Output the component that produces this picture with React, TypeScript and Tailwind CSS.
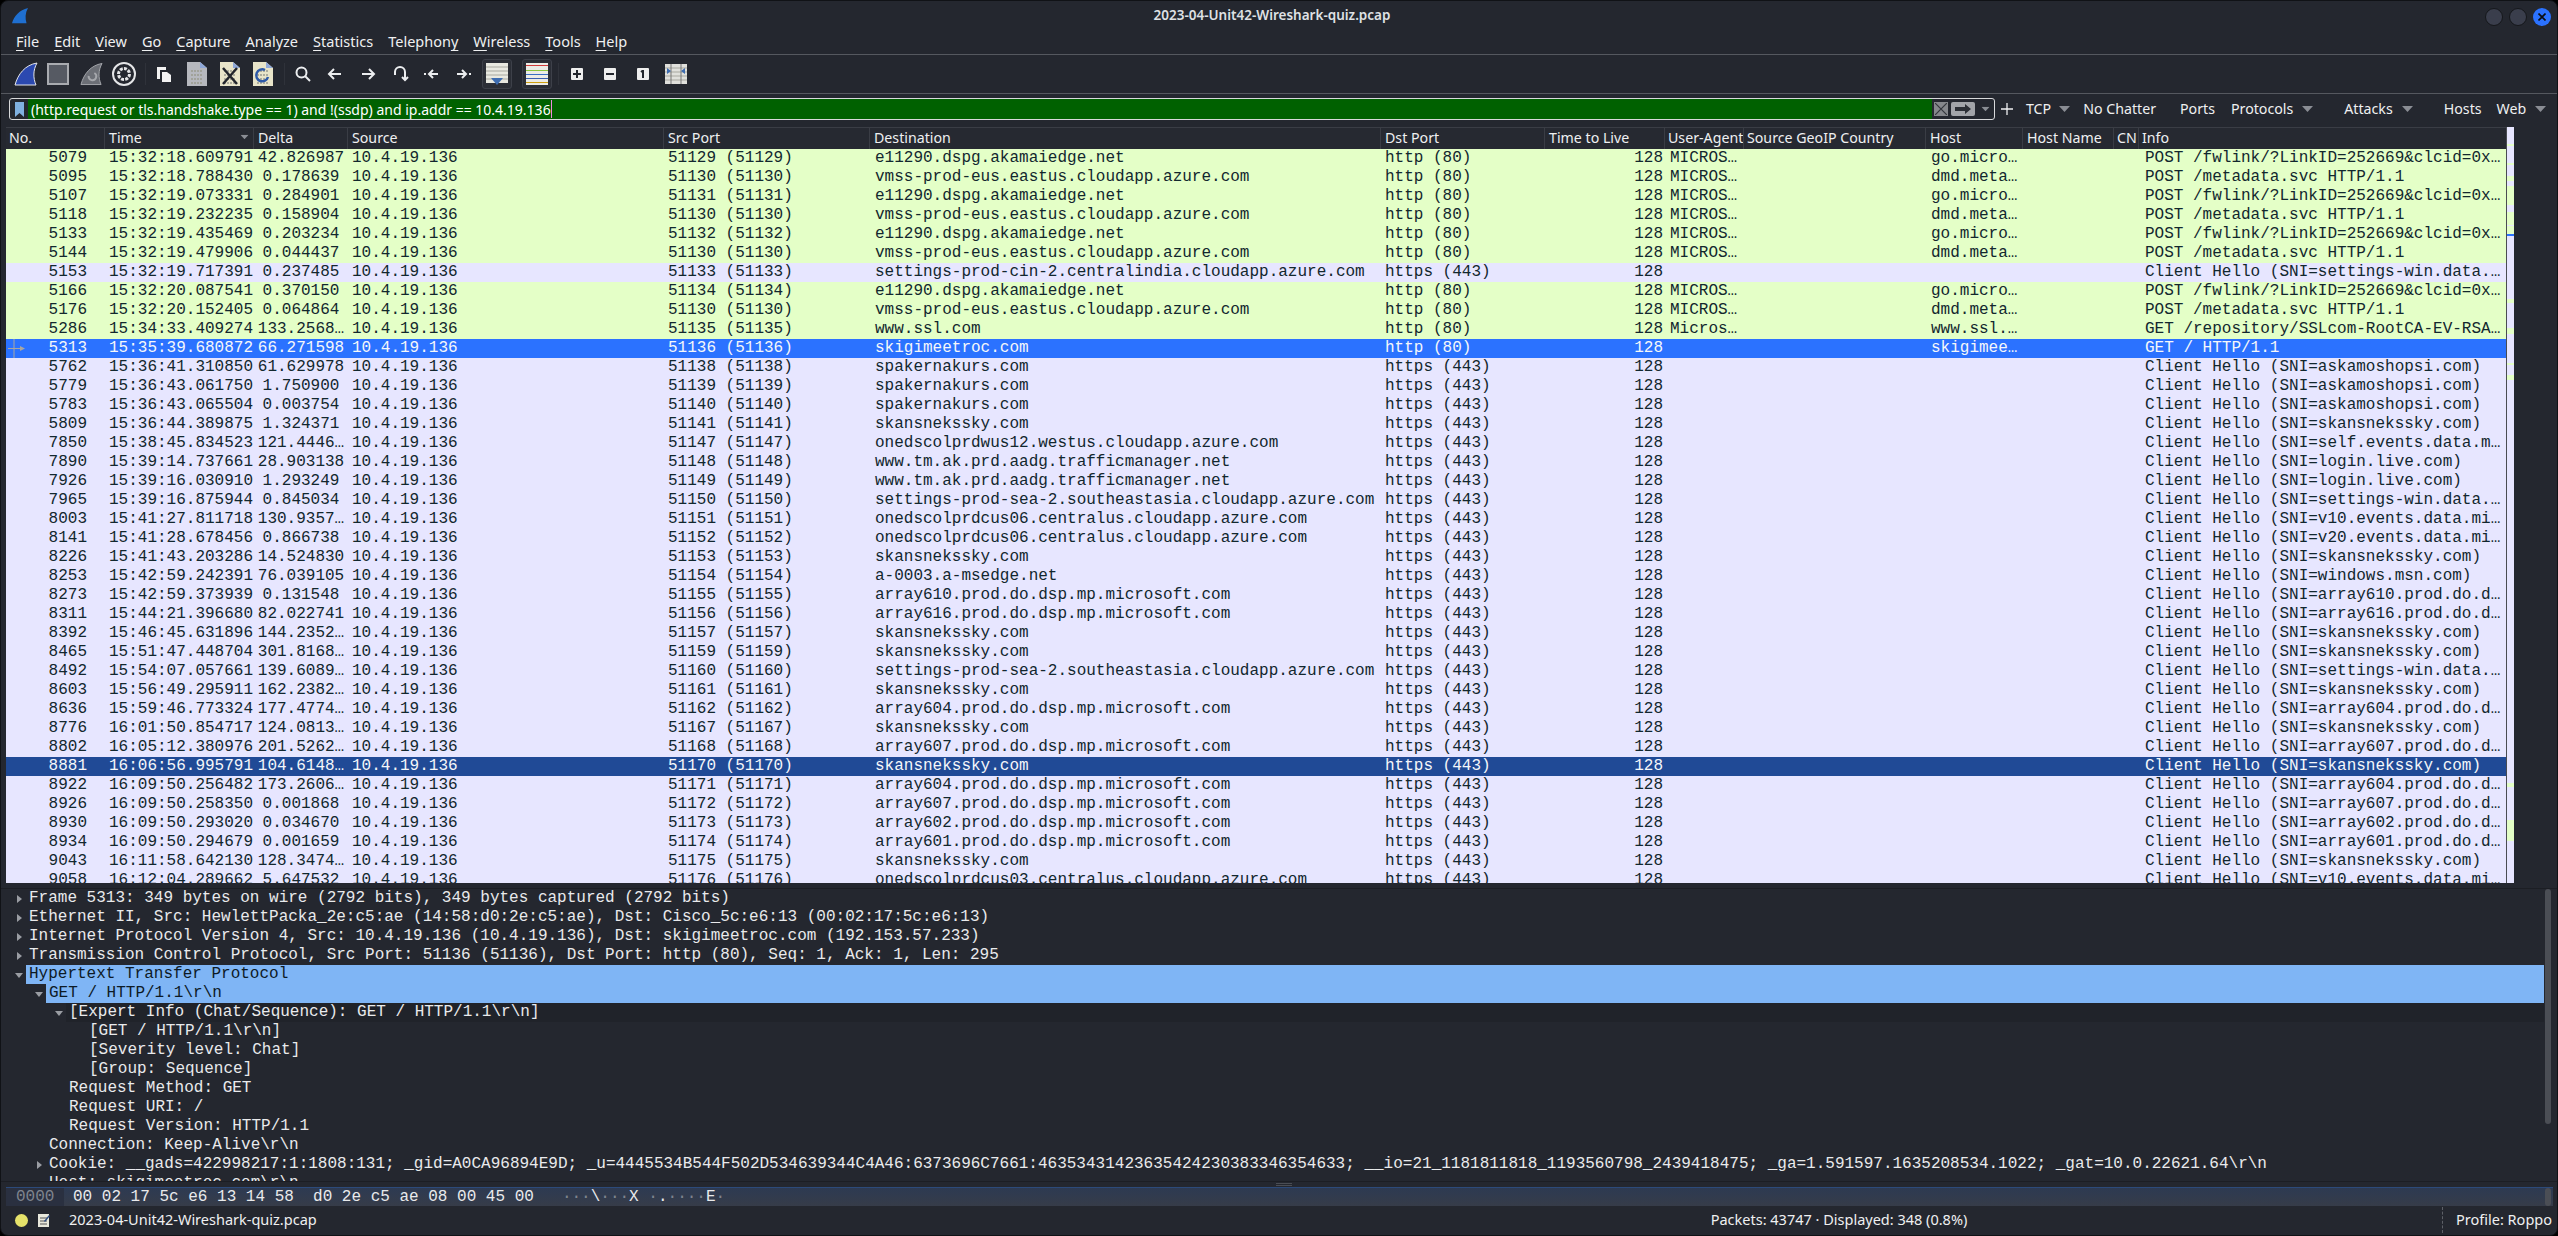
import { ReactNode } from "react";

const GRID =
  "grid grid-cols-[99px_149px_94px_316px_206px_511px_164px_120px_79px_182px_97px_91px_25px_368px]";

type Row = [string, string, string, string, string, string, string, string, string];

const E11290 = "e11290.dspg.akamaiedge.net";
const VMSS = "vmss-prod-eus.eastus.cloudapp.azure.com";
const FWLINK = "POST /fwlink/?LinkID=252669&clcid=0x…";
const META = "POST /metadata.svc HTTP/1.1";
const TM = "www.tm.ak.prd.aadg.trafficmanager.net";
const SEA = "settings-prod-sea-2.southeastasia.cloudapp.azure.com";
const CUS06 = "onedscolprdcus06.centralus.cloudapp.azure.com";
const SKAN = "skansnekssky.com";
const SKAN_SNI = "Client Hello (SNI=skansnekssky.com)";
const HTTP = "http (80)";
const TLS = "https (443)";

const rows: Row[] = [
  ["5079", "15:32:18.609791", "42.826987", "51129", E11290, HTTP, "MICROS…", "go.micro…", FWLINK],
  ["5095", "15:32:18.788430", "0.178639", "51130", VMSS, HTTP, "MICROS…", "dmd.meta…", META],
  ["5107", "15:32:19.073331", "0.284901", "51131", E11290, HTTP, "MICROS…", "go.micro…", FWLINK],
  ["5118", "15:32:19.232235", "0.158904", "51130", VMSS, HTTP, "MICROS…", "dmd.meta…", META],
  ["5133", "15:32:19.435469", "0.203234", "51132", E11290, HTTP, "MICROS…", "go.micro…", FWLINK],
  ["5144", "15:32:19.479906", "0.044437", "51130", VMSS, HTTP, "MICROS…", "dmd.meta…", META],
  ["5153", "15:32:19.717391", "0.237485", "51133", "settings-prod-cin-2.centralindia.cloudapp.azure.com", TLS, "", "", "Client Hello (SNI=settings-win.data.…"],
  ["5166", "15:32:20.087541", "0.370150", "51134", E11290, HTTP, "MICROS…", "go.micro…", FWLINK],
  ["5176", "15:32:20.152405", "0.064864", "51130", VMSS, HTTP, "MICROS…", "dmd.meta…", META],
  ["5286", "15:34:33.409274", "133.2568…", "51135", "www.ssl.com", HTTP, "Micros…", "www.ssl.…", "GET /repository/SSLcom-RootCA-EV-RSA…"],
  ["5313", "15:35:39.680872", "66.271598", "51136", "skigimeetroc.com", HTTP, "", "skigimee…", "GET / HTTP/1.1"],
  ["5762", "15:36:41.310850", "61.629978", "51138", "spakernakurs.com", TLS, "", "", "Client Hello (SNI=askamoshopsi.com)"],
  ["5779", "15:36:43.061750", "1.750900", "51139", "spakernakurs.com", TLS, "", "", "Client Hello (SNI=askamoshopsi.com)"],
  ["5783", "15:36:43.065504", "0.003754", "51140", "spakernakurs.com", TLS, "", "", "Client Hello (SNI=askamoshopsi.com)"],
  ["5809", "15:36:44.389875", "1.324371", "51141", SKAN, TLS, "", "", SKAN_SNI],
  ["7850", "15:38:45.834523", "121.4446…", "51147", "onedscolprdwus12.westus.cloudapp.azure.com", TLS, "", "", "Client Hello (SNI=self.events.data.m…"],
  ["7890", "15:39:14.737661", "28.903138", "51148", TM, TLS, "", "", "Client Hello (SNI=login.live.com)"],
  ["7926", "15:39:16.030910", "1.293249", "51149", TM, TLS, "", "", "Client Hello (SNI=login.live.com)"],
  ["7965", "15:39:16.875944", "0.845034", "51150", SEA, TLS, "", "", "Client Hello (SNI=settings-win.data.…"],
  ["8003", "15:41:27.811718", "130.9357…", "51151", CUS06, TLS, "", "", "Client Hello (SNI=v10.events.data.mi…"],
  ["8141", "15:41:28.678456", "0.866738", "51152", CUS06, TLS, "", "", "Client Hello (SNI=v20.events.data.mi…"],
  ["8226", "15:41:43.203286", "14.524830", "51153", SKAN, TLS, "", "", SKAN_SNI],
  ["8253", "15:42:59.242391", "76.039105", "51154", "a-0003.a-msedge.net", TLS, "", "", "Client Hello (SNI=windows.msn.com)"],
  ["8273", "15:42:59.373939", "0.131548", "51155", "array610.prod.do.dsp.mp.microsoft.com", TLS, "", "", "Client Hello (SNI=array610.prod.do.d…"],
  ["8311", "15:44:21.396680", "82.022741", "51156", "array616.prod.do.dsp.mp.microsoft.com", TLS, "", "", "Client Hello (SNI=array616.prod.do.d…"],
  ["8392", "15:46:45.631896", "144.2352…", "51157", SKAN, TLS, "", "", SKAN_SNI],
  ["8465", "15:51:47.448704", "301.8168…", "51159", SKAN, TLS, "", "", SKAN_SNI],
  ["8492", "15:54:07.057661", "139.6089…", "51160", SEA, TLS, "", "", "Client Hello (SNI=settings-win.data.…"],
  ["8603", "15:56:49.295911", "162.2382…", "51161", SKAN, TLS, "", "", SKAN_SNI],
  ["8636", "15:59:46.773324", "177.4774…", "51162", "array604.prod.do.dsp.mp.microsoft.com", TLS, "", "", "Client Hello (SNI=array604.prod.do.d…"],
  ["8776", "16:01:50.854717", "124.0813…", "51167", SKAN, TLS, "", "", SKAN_SNI],
  ["8802", "16:05:12.380976", "201.5262…", "51168", "array607.prod.do.dsp.mp.microsoft.com", TLS, "", "", "Client Hello (SNI=array607.prod.do.d…"],
  ["8881", "16:06:56.995791", "104.6148…", "51170", SKAN, TLS, "", "", SKAN_SNI],
  ["8922", "16:09:50.256482", "173.2606…", "51171", "array604.prod.do.dsp.mp.microsoft.com", TLS, "", "", "Client Hello (SNI=array604.prod.do.d…"],
  ["8926", "16:09:50.258350", "0.001868", "51172", "array607.prod.do.dsp.mp.microsoft.com", TLS, "", "", "Client Hello (SNI=array607.prod.do.d…"],
  ["8930", "16:09:50.293020", "0.034670", "51173", "array602.prod.do.dsp.mp.microsoft.com", TLS, "", "", "Client Hello (SNI=array602.prod.do.d…"],
  ["8934", "16:09:50.294679", "0.001659", "51174", "array601.prod.do.dsp.mp.microsoft.com", TLS, "", "", "Client Hello (SNI=array601.prod.do.d…"],
  ["9043", "16:11:58.642130", "128.3474…", "51175", SKAN, TLS, "", "", SKAN_SNI],
  ["9058", "16:12:04.289662", "5.647532", "51176", "onedscolprdcus03.centralus.cloudapp.azure.com", TLS, "", "", "Client Hello (SNI=v10.events.data.mi…"],
];

const headers: [string, string][] = [
  ["No.", "pl-[3px]"],
  ["Time", "pl-[4px]"],
  ["Delta", "pl-[4px]"],
  ["Source", "pl-[4px]"],
  ["Src Port", "pl-[4px]"],
  ["Destination", "pl-[4px]"],
  ["Dst Port", "pl-[4px]"],
  ["Time to Live", "pl-[4px]"],
  ["User-Agent", "pl-[3px]"],
  ["Source GeoIP Country", "pl-[3px]"],
  ["Host", "pl-[4px]"],
  ["Host Name", "pl-[4px]"],
  ["CN", "pl-[3px]"],
  ["Info", "pl-[3px]"],
];

// packet map strip beside the list, top to bottom
const minimap = [
  "h-[17px] bg-[#e7e6ff]",
  "h-[2px] bg-[#e4ffc7]",
  "h-[17px] bg-[#e7e6ff]",
  "h-[2px] bg-[#e4ffc7]",
  "h-[11px] bg-[#e7e6ff]",
  "h-[5px] bg-[#e4ffc7]",
  "h-[5px] bg-[#e7e6ff]",
  "h-[19px] bg-[#e4ffc7]",
  "h-[7px] bg-[#e7e6ff]",
  "h-[13px] bg-[#e4ffc7]",
  "h-[1px] bg-[#e7e6ff]",
  "h-[8px] bg-[#e4ffc7]",
  "h-[2px] bg-[#2b72ff]",
  "h-[63px] bg-[#e7e6ff]",
  "h-[4px] bg-[#e4ffc7]",
  "h-[25px] bg-[#e7e6ff]",
  "h-[6px] bg-[#e4ffc7]",
  "h-[29px] bg-[#e7e6ff]",
  "h-[2px] bg-[#e4ffc7]",
  "h-[10px] bg-[#e7e6ff]",
  "h-[5px] bg-[#e4ffc7]",
  "h-[404px] bg-[#e7e6ff]",
  "h-[4px] bg-[#e4ffc7]",
  "h-[33px] bg-[#e7e6ff]",
  "h-[21px] bg-[#e4ffc7]",
  "h-[42px] bg-[#e7e6ff]",
];

const details: { level: number; arrow?: "right" | "down"; text: string; style?: string }[] = [
  { level: 0, arrow: "right", text: "Frame 5313: 349 bytes on wire (2792 bits), 349 bytes captured (2792 bits)" },
  { level: 0, arrow: "right", text: "Ethernet II, Src: HewlettPacka_2e:c5:ae (14:58:d0:2e:c5:ae), Dst: Cisco_5c:e6:13 (00:02:17:5c:e6:13)" },
  { level: 0, arrow: "right", text: "Internet Protocol Version 4, Src: 10.4.19.136 (10.4.19.136), Dst: skigimeetroc.com (192.153.57.233)" },
  { level: 0, arrow: "right", text: "Transmission Control Protocol, Src Port: 51136 (51136), Dst Port: http (80), Seq: 1, Ack: 1, Len: 295" },
  { level: 0, arrow: "down", text: "Hypertext Transfer Protocol", style: "bg-[#7fb5f5] text-[#0d1a26]" },
  { level: 1, arrow: "down", text: "GET / HTTP/1.1\\r\\n", style: "bg-[#7fb5f5] text-[#0d1a26]" },
  { level: 2, arrow: "down", text: "[Expert Info (Chat/Sequence): GET / HTTP/1.1\\r\\n]", style: "bg-[#20232a]" },
  { level: 3, text: "[GET / HTTP/1.1\\r\\n]" },
  { level: 3, text: "[Severity level: Chat]" },
  { level: 3, text: "[Group: Sequence]" },
  { level: 2, text: "Request Method: GET" },
  { level: 2, text: "Request URI: /" },
  { level: 2, text: "Request Version: HTTP/1.1" },
  { level: 1, text: "Connection: Keep-Alive\\r\\n" },
  {
    level: 1,
    arrow: "right",
    text: "Cookie: __gads=422998217:1:1808:131; _gid=A0CA96894E9D; _u=4445534B544F502D534639344C4A46:6373696C7661:46353431423635424230383346354633; __io=21_1181811818_1193560798_2439418475; _ga=1.591597.1635208534.1022; _gat=10.0.22621.64\\r\\n",
  },
  { level: 1, text: "Host: skigimeetroc.com\\r\\n" },
];

function Menu({ pre = "", hot, post = "" }: { pre?: string; hot: string; post?: string }) {
  return (
    <span>
      {pre}
      <span className="underline underline-offset-[3px]">{hot}</span>
      {post}
    </span>
  );
}

function Fin({ color }: { color: string }) {
  return (
    <svg width="24" height="24" viewBox="0 0 24 24">
      <path d="M1 23C4 12 11 3 23 1c-4 7-4 15-1 22Z" fill={color} stroke="#e6e7ea" strokeWidth="1" />
    </svg>
  );
}

function PageIcon({ children, paper = "#e8e4c9" }: { children?: ReactNode; paper?: string }) {
  return (
    <svg width="20" height="24" viewBox="0 0 20 24">
      <path d="M0 0h13l7 6v18H0Z" fill={paper} />
      <path d="M13 0l7 6h-7Z" fill="#8fa8d8" />
      <path d="M4 9h12M4 13h12M4 17h12M4 21h12" stroke="#9a9a8e" strokeWidth="1.5" strokeDasharray="2 1" />
      {children}
    </svg>
  );
}

function NavArrow({ d }: { d: string }) {
  return (
    <svg width="18" height="18" viewBox="0 0 18 18" fill="none" stroke="#eceef0" strokeWidth="2">
      <path d={d} />
    </svg>
  );
}

function Square({ children }: { children: ReactNode }) {
  return <div className="flex h-[12px] w-[12px] items-center justify-center rounded-[1px] bg-[#eeeeee]">{children}</div>;
}

function Caret({ className = "" }: { className?: string }) {
  return (
    <svg width="11" height="6" viewBox="0 0 11 6" className={`shrink-0 ${className}`}>
      <path d="M0 0h11L5.5 6Z" fill="#8a8d94" />
    </svg>
  );
}

function TreeArrow({ dir }: { dir: "right" | "down" }) {
  return (
    <svg width="8" height="8" viewBox="0 0 8 8">
      <path d={dir === "right" ? "M2 0l5 4-5 4Z" : "M0 2h8L4 7Z"} fill="#9a9da3" />
    </svg>
  );
}

function Toolbar() {
  return (
    <div className="flex h-[39px] shrink-0 items-center border-b border-[#55585f] pl-[13px]">
      <Fin color="#2b49b0" />
      <div className="ml-[9px] h-[22px] w-[22px] border-2 border-[#a9abb0] bg-[#565a63]" />
      <div className="ml-[11px]">
        <svg width="23" height="24" viewBox="0 0 24 24">
          <path d="M1 23C4 12 11 3 23 1c-4 7-4 15-1 22Z" fill="#6c6f76" stroke="#a5a7ac" strokeWidth="1" />
          <path d="M9 14a4 4 0 1 0 6-3" fill="none" stroke="#a5a7ac" strokeWidth="2" />
        </svg>
      </div>
      <div className="ml-[9px]">
        <svg width="24" height="24" viewBox="0 0 24 24" fill="none">
          <circle cx="12" cy="12" r="11" stroke="#e4e5e7" strokeWidth="2" />
          <circle cx="12" cy="12" r="5.5" stroke="#e4e5e7" strokeWidth="3" strokeDasharray="3 1.2" />
        </svg>
      </div>
      <div className="ml-[9px] h-[22px] w-px bg-[#2f323a]" />
      <div className="ml-[11px]">
        <svg width="15" height="15" viewBox="0 0 15 15">
          <path d="M0 0h9v3H3v9H0Z" fill="#f2f2f2" />
          <path d="M5 5h5l4 3v7H5Z" fill="#f2f2f2" />
        </svg>
      </div>
      <div className="ml-[15px]">
        <PageIcon paper="#b6b8be" />
      </div>
      <div className="ml-[13px]">
        <PageIcon>
          <path d="M3 6l14 16M17 6L3 22" stroke="#22252c" strokeWidth="2.5" />
        </PageIcon>
      </div>
      <div className="ml-[13px]">
        <PageIcon>
          <path d="M15 15a6 6 0 1 1-3-7" fill="none" stroke="#2e5aa8" strokeWidth="2.5" />
        </PageIcon>
      </div>
      <div className="ml-[11px] h-[22px] w-px bg-[#2f323a]" />
      <div className="ml-[10px]">
        <svg width="16" height="16" viewBox="0 0 16 16" fill="none" stroke="#eceef0" strokeWidth="2">
          <circle cx="6.5" cy="6.5" r="5" />
          <path d="M10 10l5 5" />
        </svg>
      </div>
      <div className="ml-[15px]">
        <NavArrow d="M15 9H3M8 4L3 9l5 5" />
      </div>
      <div className="ml-[15px]">
        <NavArrow d="M3 9h12M10 4l5 5-5 5" />
      </div>
      <div className="ml-[14px]">
        <NavArrow d="M4 10V7a5 5 0 0 1 10 0v8M11 12l3 3 3-3" />
      </div>
      <div className="ml-[13px]">
        <NavArrow d="M16 9H7M11 5L7 9l4 4M2 9h2" />
      </div>
      <div className="ml-[15px]">
        <NavArrow d="M2 9h9M7 5l4 4-4 4M14 9h2" />
      </div>
      <div className="ml-[9px] flex h-[30px] w-[30px] items-center justify-center rounded-[3px] border border-[#3d4049] bg-[#2b2e36]">
        <svg width="22" height="22" viewBox="0 0 22 22">
          <rect width="22" height="20" fill="#e8e8e0" />
          <path d="M0 4h22M0 8h22M0 12h22M0 16h22" stroke="#a8a8a0" strokeWidth="1" />
          <path d="M5 15h12l-6 7Z" fill="#3d6cb0" />
        </svg>
      </div>
      <div className="ml-[10px] flex h-[30px] w-[30px] items-center justify-center rounded-[3px] border border-[#3d4049] bg-[#2b2e36]">
        <svg width="22" height="22" viewBox="0 0 22 22">
          <rect width="22" height="22" fill="#ecece6" />
          <path d="M0 2.5h22" stroke="#d23a3a" strokeWidth="1" />
          <path d="M0 7.5h22" stroke="#8cc63f" strokeWidth="1" />
          <path d="M0 11.5h22" stroke="#3a6fc4" strokeWidth="1" />
          <path d="M0 15.5h22" stroke="#3a5fb0" strokeWidth="1" />
          <path d="M0 19.5h22" stroke="#d0a010" strokeWidth="1" />
        </svg>
      </div>
      <div className="ml-[6px] h-[22px] w-px bg-[#2f323a]" />
      <div className="ml-[12px]">
        <Square>
          <svg width="8" height="8" viewBox="0 0 8 8">
            <path d="M4 0v8M0 4h8" stroke="#22252c" strokeWidth="2" />
          </svg>
        </Square>
      </div>
      <div className="ml-[21px]">
        <Square>
          <svg width="8" height="8" viewBox="0 0 8 8">
            <path d="M0 4h8" stroke="#22252c" strokeWidth="2" />
          </svg>
        </Square>
      </div>
      <div className="ml-[21px]">
        <Square>
          <svg width="8" height="8" viewBox="0 0 8 8">
            <path d="M2 2l2-1.5V8" fill="none" stroke="#22252c" strokeWidth="2" />
          </svg>
        </Square>
      </div>
      <div className="ml-[16px]">
        <svg width="22" height="20" viewBox="0 0 22 20">
          <rect width="22" height="20" fill="#e0e0dc" />
          <path d="M0 4h22M0 8h22M0 12h22M0 16h22" stroke="#a8a8a0" strokeWidth="1" />
          <path d="M6 0v20M16 0v20" stroke="#777" strokeWidth="1" />
          <path d="M2 4l4 3-4 3ZM20 4l-4 3 4 3Z" fill="#3d6cb0" />
        </svg>
      </div>
    </div>
  );
}

function FilterBar() {
  return (
    <div className="flex h-[33px] shrink-0 items-start whitespace-nowrap pl-[8px] pt-[4px] text-[14.2px] text-[#eff0f1]">
      <div className="flex h-[22px] w-[1986px] shrink-0 items-stretch overflow-hidden rounded-[3px] border border-[#d8d9db] bg-[#24272f]">
        <div className="flex w-[18px] shrink-0 items-center justify-center">
          <svg width="9" height="15" viewBox="0 0 9 15">
            <path d="M0 0h9v15L4.5 11 0 15Z" fill="#7fb0e0" />
          </svg>
        </div>
        <div className="flex h-full w-[1904px] shrink-0 items-center bg-[#006100] pl-[3px] text-[14px] text-white">
          <span>(http.request or tls.handshake.type == 1) and !(ssdp) and ip.addr == 10.4.19.136</span>
          <span className="h-[18px] w-px bg-[#f08ae0]" />
        </div>
        <div className="ml-[2px] flex items-center">
          <div className="flex h-[14px] w-[14px] items-center justify-center bg-[#85878c]">
            <svg width="12" height="12" viewBox="0 0 12 12">
              <path d="M0 0l12 12M12 0L0 12" stroke="#33363d" strokeWidth="1.2" />
            </svg>
          </div>
          <div className="ml-[3px] flex h-[14px] w-[24px] items-center justify-center rounded-[2px] bg-[#a2a4a9]">
            <svg width="16" height="10" viewBox="0 0 16 10">
              <path d="M0 3h10V0l6 5-6 5V7H0Z" fill="#2b2e35" />
            </svg>
          </div>
          <Caret className="ml-[5px] scale-75" />
        </div>
      </div>
      <div className="flex h-[22px] items-center">
        <svg width="12" height="12" viewBox="0 0 12 12" className="ml-[6px] mr-[13px] shrink-0">
          <path d="M6 0v12M0 6h12" stroke="#eff0f1" strokeWidth="1.3" />
        </svg>
        <span>TCP</span>
        <Caret className="ml-[8px]" />
        <span className="ml-[13px]">No Chatter</span>
        <span className="ml-[24px]">Ports</span>
        <span className="ml-[16px]">Protocols</span>
        <Caret className="ml-[9px]" />
        <span className="ml-[31px]">Attacks</span>
        <Caret className="ml-[9px]" />
        <span className="ml-[31px]">Hosts</span>
        <span className="ml-[15px]">Web</span>
        <Caret className="ml-[9px]" />
      </div>
    </div>
  );
}

function PacketList() {
  return (
    <div className="flex h-[756px] shrink-0 items-start pl-[5px]">
      <div className="h-[756px] w-[2500px] overflow-hidden border-t border-[#3a3d45]">
        <div className={`${GRID} h-[21px] items-center bg-[#262931] text-[14.2px] text-[#eff0f1]`}>
          {headers.map(([name, pad]) => (
            <div key={name} className={`relative h-full overflow-hidden whitespace-nowrap border-r border-[#3a3d45] leading-[20px] ${pad}`}>
              {name}
              {name === "Time" && <Caret className="absolute right-[3px] top-[6px] scale-75" />}
            </div>
          ))}
        </div>
        <div className="font-['Liberation_Mono',monospace] text-[16px] leading-[19px]">
          {rows.map((r) => {
            const green = r[5] === HTTP;
            let tone = green ? "bg-[#e4ffc7] text-[#12272e]" : "bg-[#e7e6ff] text-[#12272e]";
            if (r[0] === "5313") tone = "bg-[#2b72ff] text-[#f5f7fa]";
            if (r[0] === "8881") tone = "bg-[#204a96] text-[#f5f7fa]";
            return (
              <div key={r[0]} className={`${GRID} h-[19px] whitespace-pre ${tone}`}>
                <div className="relative pr-[18px] text-right">
                  {r[0] === "5313" && (
                    <svg width="18" height="19" viewBox="0 0 18 19" className="absolute left-[2px] top-0">
                      <path d="M6 0v19M0 9.5h15" stroke="#a9a6a0" strokeWidth="1" fill="none" />
                      <path d="M12 7l5 2.5-5 2.5Z" fill="#a9a6a0" />
                    </svg>
                  )}
                  {r[0]}
                </div>
                <div className="pl-[4px]">{r[1]}</div>
                <div className="text-center">{r[2]}</div>
                <div className="pl-[4px]">10.4.19.136</div>
                <div className="pl-[4px]">{`${r[3]} (${r[3]})`}</div>
                <div className="pl-[5px]">{r[4]}</div>
                <div className="pl-[4px]">{r[5]}</div>
                <div className="pr-[2px] text-right">128</div>
                <div className="pl-[5px]">{r[6]}</div>
                <div />
                <div className="pl-[5px]">{r[7]}</div>
                <div />
                <div />
                <div className="pl-[6px]">{r[8]}</div>
              </div>
            );
          })}
        </div>
      </div>
      <div className="h-[756px] w-px bg-[#4a4c52]" />
      <div className="flex h-[756px] w-[7px] flex-col">
        {minimap.map((c, i) => (
          <div key={i} className={c} />
        ))}
      </div>
    </div>
  );
}

function DetailTree() {
  return (
    <div className="mt-[5px] flex h-[294px] shrink-0 overflow-hidden border-y border-[#1c1e24] pl-[5px] font-['Liberation_Mono',monospace] text-[16px] leading-[19px] text-[#e9eaec]">
      <div className="w-[2538px] min-w-0 shrink-0 overflow-hidden">
        {details.map((d) => (
          <div key={d.text} className="flex h-[19px] items-stretch whitespace-pre">
            <div className="ml-[6px] flex shrink-0 items-center justify-end pr-[3px]" style={{ width: 14 + d.level * 20 }}>
              {d.arrow && <TreeArrow dir={d.arrow} />}
            </div>
            <div className={`flex-1 pl-[3px] ${d.style ?? ""}`}>{d.text}</div>
          </div>
        ))}
      </div>
      <div className="ml-[1px] h-[235px] w-[6px] rounded-[3px] bg-[#4b4e55]" />
    </div>
  );
}

function HexPane() {
  return (
    <div className="relative ml-[5px] mr-[4px] mt-[5px] flex h-[19px] shrink-0 items-stretch whitespace-pre border-t border-[#2c4a7a] bg-gradient-to-b from-[#2d3a52] to-[#363c49] font-['Liberation_Mono',monospace] text-[16px] leading-[18px] text-[#e9eaec]">
      <div className="absolute -top-[5px] left-[1270px] h-[3px] w-[16px] border-y border-[#4a4d54]" />
      <div className="w-[58px] bg-[#2a3040] pl-[10px] text-[#7f848e]">0000</div>
      <div className="pl-[9px]">00 02 17 5c e6 13 14 58  d0 2e c5 ae 08 00 45 00</div>
      <div className="pl-[28px]">
        <span className="text-[#7f848e]">···</span>\<span className="text-[#7f848e]">···</span>X <span className="text-[#7f848e]">·</span>.<span className="text-[#7f848e]">····</span>E<span className="text-[#7f848e]">·</span>
      </div>
      <div className="ml-auto mr-[2px] h-full w-[6px] rounded-[3px] bg-[#4b4e55]" />
    </div>
  );
}

function StatusBar() {
  return (
    <div className="flex h-[28px] shrink-0 items-center whitespace-nowrap pl-[14px] pr-[5px] text-[14.5px] text-[#eff0f1]">
      <div className="h-[13px] w-[13px] shrink-0 rounded-full bg-[#e6e26a]" />
      <svg width="12" height="13" viewBox="0 0 12 13" className="ml-[10px] shrink-0">
        <rect width="11" height="13" fill="#e8e8dc" />
        <path d="M2 4h7M2 7h7M2 10h7" stroke="#555" strokeWidth="1" />
        <path d="M6 7l5-6 1 1-5 6Z" fill="#2a4a80" />
      </svg>
      <span className="ml-[19px]">2023-04-Unit42-Wireshark-quiz.pcap</span>
      <span className="ml-[1394px]">Packets: 43747 · Displayed: 348 (0.8%)</span>
      <div className="ml-auto h-[26px] border-l border-dashed border-[#5d6067]" />
      <span className="ml-[13px]">Profile: Roppo</span>
    </div>
  );
}

export default function App() {
  return (
    <div className="h-[1236px] w-[2558px] overflow-hidden bg-black font-['Noto_Sans',sans-serif] text-[16px]">
      <div className="flex h-full flex-col overflow-hidden rounded-[8px] border border-[#101216] bg-[#24272f]">
        {/* title bar */}
        <div className="relative flex h-[29px] shrink-0 items-center justify-center pr-[14px] text-[13.5px] font-semibold text-[#dfe1e4]">
          <svg width="18" height="16" viewBox="0 0 24 22" className="absolute left-[10px] top-[7px]">
            <path d="M1 21C4 11 11 3 23 0c-4 7-4 14-2 21Z" fill="#1f6fd0" />
          </svg>
          2023-04-Unit42-Wireshark-quiz.pcap
          <div className="absolute right-[6px] top-[7px] flex gap-[6px]">
            <div className="h-[18px] w-[18px] rounded-full border border-[#15171b] bg-[#3a3e4c]" />
            <div className="h-[18px] w-[18px] rounded-full border border-[#15171b] bg-[#3a3e4c]" />
            <div className="flex h-[18px] w-[18px] items-center justify-center rounded-full bg-[#2b72ff]">
              <svg width="8" height="8" viewBox="0 0 8 8">
                <path d="M0.5 0.5l7 7M7.5 0.5l-7 7" stroke="#0c0e12" strokeWidth="1.6" />
              </svg>
            </div>
          </div>
        </div>
        {/* menu */}
        <div className="flex h-[25px] shrink-0 items-center gap-[15px] border-b border-[#55585f] pl-[15px] text-[14.5px] text-[#eff0f1]">
          <Menu hot="F" post="ile" />
          <Menu hot="E" post="dit" />
          <Menu hot="V" post="iew" />
          <Menu hot="G" post="o" />
          <Menu hot="C" post="apture" />
          <Menu hot="A" post="nalyze" />
          <Menu hot="S" post="tatistics" />
          <Menu pre="Telephon" hot="y" />
          <Menu hot="W" post="ireless" />
          <Menu hot="T" post="ools" />
          <Menu hot="H" post="elp" />
        </div>
        <Toolbar />
        <FilterBar />
        <PacketList />
        <DetailTree />
        <HexPane />
        <StatusBar />
      </div>
    </div>
  );
}
